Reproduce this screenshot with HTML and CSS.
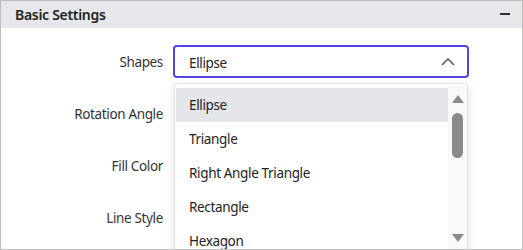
FILE: index.html
```html
<!DOCTYPE html>
<html>
<head>
<meta charset="utf-8">
<link rel="stylesheet" href="styles.css">
</head>
<body>
<div class="panel">
  <div class="header">
    <span class="title">Basic Settings</span>
    <span class="collapse"></span>
  </div>
  <div class="content">
    <div class="row">
      <label class="label">Shapes</label>
      <div class="select">
        <span class="value">Ellipse</span>
        <svg class="chevron" width="14" height="8" viewBox="0 0 14 8"><polyline points="1,7 7,1 13,7" fill="none" stroke="#555" stroke-width="1.5"/></svg>
      </div>
    </div>
    <div class="row"><label class="label">Rotation Angle</label></div>
    <div class="row"><label class="label">Fill Color</label></div>
    <div class="row"><label class="label">Line Style</label></div>
  </div>
  <div class="popup">
    <ul class="list">
      <li class="item active">Ellipse</li>
      <li class="item">Triangle</li>
      <li class="item">Right Angle Triangle</li>
      <li class="item">Rectangle</li>
      <li class="item">Hexagon</li>
    </ul>
    <div class="scrollbar">
      <span class="arrow up"></span>
      <span class="thumb"></span>
      <span class="spacer"></span>
      <span class="arrow down"></span>
    </div>
  </div>
</div>
</body>
</html>
```
FILE: styles.css
```css
* { box-sizing: border-box; }
html, body { margin: 0; padding: 0; background: #fff; }
body { font-family: "Noto Sans", "Open Sans", sans-serif; color: #222; letter-spacing: -0.35px; }
.panel {
  position: relative;
  width: 523px;
  height: 250px;
  border: 1px solid #bdbdbd;
  overflow: hidden;
}
.header {
  height: 27px;
  background: #e6e7eb;
  display: flex;
  align-items: center;
  justify-content: space-between;
  padding: 0 12px 0 14px;
}
.title { font-size: 14px; font-weight: 600; color: #222; letter-spacing: -0.3px; }
.collapse { width: 10px; height: 2px; background: #2b2f3a; margin-top: -2px; }
.content { padding-top: 17px; }
.row {
  display: flex;
  height: 52px;
  align-items: flex-start;
}
.label {
  width: 162px;
  text-align: right;
  font-size: 13.5px;
  color: #333;
  line-height: 35px;
}
.select {
  margin-left: 10px;
  width: 296px;
  height: 33px;
  border: 2px solid #4f46e5;
  border-radius: 4px;
  display: flex;
  align-items: center;
  justify-content: space-between;
  padding: 0 12px 0 14px;
}
.value { font-size: 13.5px; color: #222; margin-top: 2px; }
.chevron { display: block; margin-top: 1px; }
.popup {
  position: absolute;
  left: 173px;
  top: 82px;
  width: 294px;
  height: 200px;
  background: #fff;
  border: 1px solid #e4e4e4;
  border-radius: 3px;
  box-shadow: 0 3px 10px rgba(0,0,0,0.12);
  display: flex;
}
.list {
  list-style: none;
  margin: 0;
  padding: 4px 0 0 1px;
  flex: 1;
}
.item {
  height: 34px;
  line-height: 35px;
  padding-left: 13px;
  font-size: 13.5px;
  color: #222;
}
.item.active { background: #e5e6ea; }
.scrollbar {
  width: 19px;
  background: #fafafa;
  display: flex;
  flex-direction: column;
  align-items: center;
  padding: 11px 0 6px 0;
}
.arrow {
  width: 0; height: 0;
  border-left: 6px solid transparent;
  border-right: 6px solid transparent;
}
.arrow.up { border-bottom: 8px solid #8a8a8a; }
.arrow.down { border-top: 8px solid #8a8a8a; }
.thumb {
  margin-top: 10px;
  width: 11px;
  height: 45px;
  border-radius: 6px;
  background: #8a8a8a;
}
.spacer { height: 76px; }
```
